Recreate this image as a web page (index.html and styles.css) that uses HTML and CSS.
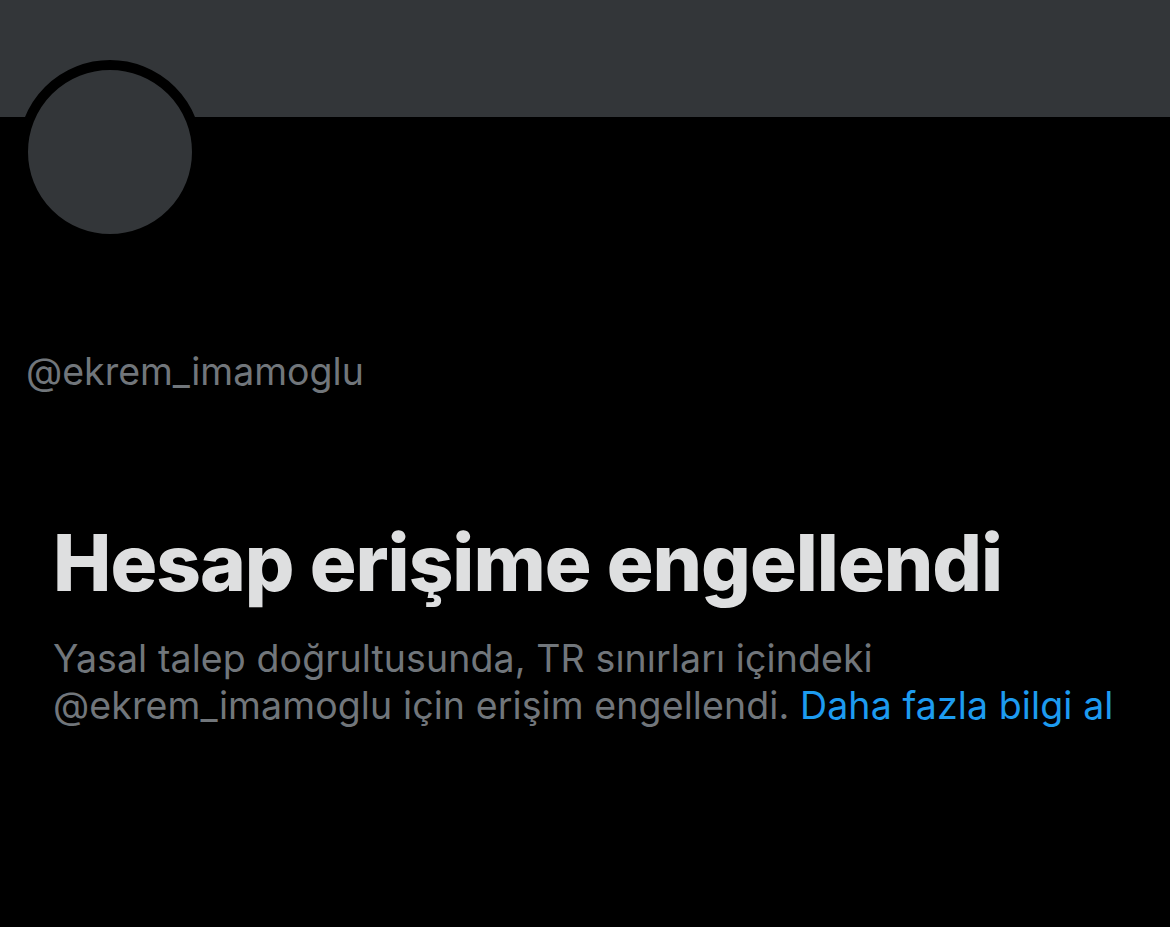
FILE: index.html
```html
<!DOCTYPE html>
<html lang="tr">
<head>
    <meta charset="UTF-8">
    <meta name="viewport" content="width=device-width, initial-scale=1.0">
    <title>@ekrem_imamoglu</title>
    <link rel="stylesheet" href="styles.css">
</head>
<body>
    <div class="banner"></div>

    <div class="profile">
        <div class="avatar"></div>
        <div class="handle">@ekrem_imamoglu</div>
    </div>

    <div class="withheld">
        <h1>Hesap erişime engellendi</h1>
        <p>
            Yasal talep doğrultusunda, TR sınırları içindeki
            @ekrem_imamoglu için erişim engellendi. <a href="#">Daha fazla bilgi al</a>
        </p>
    </div>
</body>
</html>
```

FILE: styles.css
```css
* {
    margin: 0;
    padding: 0;
    box-sizing: border-box;
}

body {
    font-family: Inter, 'Noto Sans', sans-serif;
    background: #000;
    color: #e7e9ea;
    min-height: 100vh;
}

.banner {
    height: 117px;
    background: #333639;
}

.profile {
    padding-left: 18px;
}

.avatar {
    width: 184px;
    height: 184px;
    margin-top: -57px;
    border-radius: 50%;
    border: 10px solid #000;
    background: #333639;
}

.handle {
    margin-top: 103px;
    padding-left: 8px;
    font-size: 37.5px;
    line-height: 50px;
    color: #71767b;
}

.withheld {
    padding: 118px 53px 0;
}

.withheld h1 {
    font-size: 78px;
    font-weight: 800;
    line-height: 96px;
    letter-spacing: -1px;
    color: #dedfe0;
    margin-bottom: 24px;
}

.withheld p {
    font-size: 37.5px;
    line-height: 47px;
    letter-spacing: 0.1px;
    color: #71767b;
    max-width: 1080px;
}

.withheld a {
    color: #1d9bf0;
    text-decoration: none;
}
```
